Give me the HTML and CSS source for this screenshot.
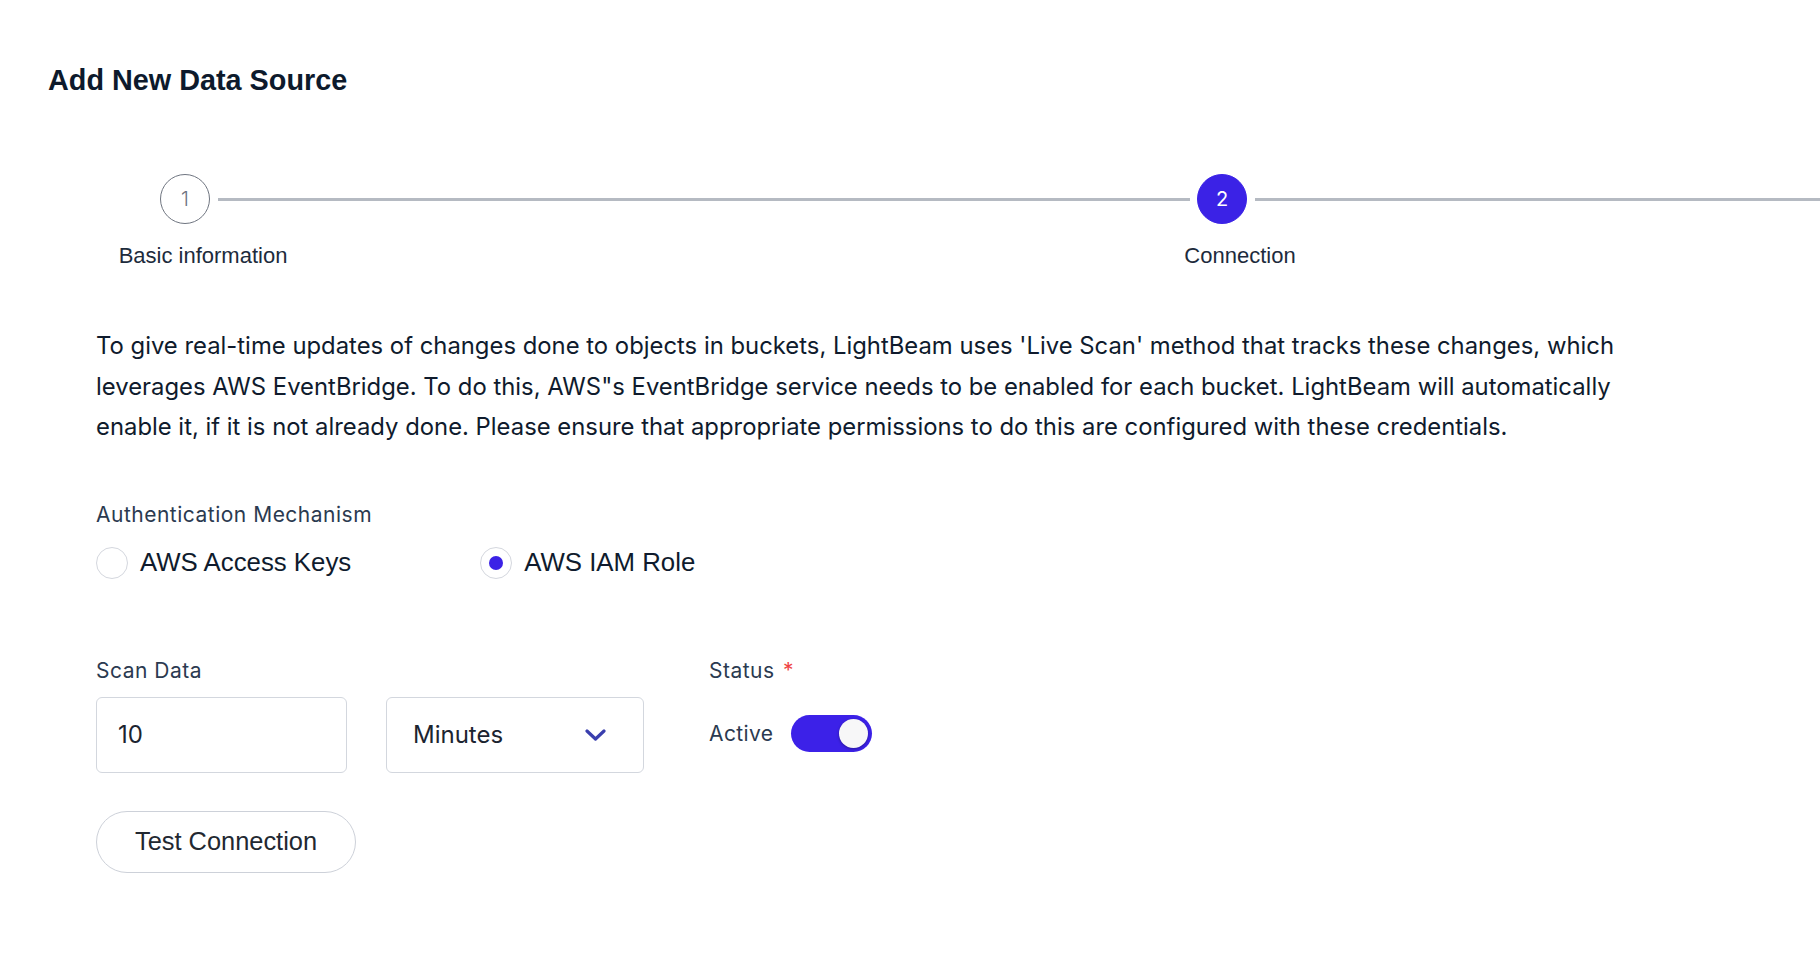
FILE: index.html
```html
<!DOCTYPE html>
<html lang="en">
<head>
    <meta charset="UTF-8">
    <meta name="viewport" content="width=device-width, initial-scale=1.0">
    <title>Add New Data Source</title>
    <link rel="stylesheet" href="styles.css">
</head>
<body>
    <div class="page">
        <h1 class="page-title">Add New Data Source</h1>

        <div class="stepper">
            <div class="step">
                <div class="step-head">
                    <span class="step-num">1</span>
                    <span class="step-line"></span>
                </div>
                <div class="step-label"><span>Basic information</span></div>
            </div>
            <div class="step step-active">
                <div class="step-head">
                    <span class="step-num">2</span>
                    <span class="step-line"></span>
                </div>
                <div class="step-label"><span>Connection</span></div>
            </div>
        </div>

        <div class="form">
            <p class="intro">
                To give real-time updates of changes done to objects in buckets, LightBeam uses 'Live Scan' method that tracks these changes, which
                leverages AWS EventBridge. To do this, AWS"s EventBridge service needs to be enabled for each bucket. LightBeam will automatically
                enable it, if it is not already done. Please ensure that appropriate permissions to do this are configured with these credentials.
            </p>

            <div class="field auth">
                <div class="field-label">Authentication Mechanism</div>
                <div class="radio-group">
                    <label class="radio">
                        <span class="radio-circle"></span>
                        AWS Access Keys
                    </label>
                    <label class="radio radio-checked">
                        <span class="radio-circle"></span>
                        AWS IAM Role
                    </label>
                </div>
            </div>

            <div class="row">
                <div class="field scan">
                    <div class="field-label">Scan Data</div>
                    <div class="scan-inputs">
                        <div class="input-box">10</div>
                        <div class="select-box">
                            <span>Minutes</span>
                            <svg class="chevron" width="21" height="12" viewBox="0 0 21 12">
                                <path d="M2 2l8.5 8 8.5-8" fill="none" stroke="#3a3fae" stroke-width="3.2" stroke-linecap="round" stroke-linejoin="round"/>
                            </svg>
                        </div>
                    </div>
                </div>
                <div class="field">
                    <div class="field-label">Status <span class="required">*</span></div>
                    <div class="status">
                        <span class="status-text">Active</span>
                        <span class="toggle"><span class="toggle-knob"></span></span>
                    </div>
                </div>
            </div>

            <button class="btn-outline">Test Connection</button>
        </div>
    </div>
</body>
</html>
```

FILE: styles.css
```css
body {
    margin: 0;
    background: #ffffff;
    font-family: 'Inter', 'Noto Sans', sans-serif;
    color: #0f1b2d;
    overflow-x: hidden;
}
.page {
    padding: 62px 0 40px 48px;
}
.page-title {
    margin: 0;
    font-family: 'Liberation Sans', Arial, sans-serif;
    font-size: 28.8px;
    line-height: 36px;
    font-weight: 700;
    color: #0d1a2c;
}

/* stepper */
.stepper {
    display: flex;
    margin-top: 76px;
    padding-left: 112px;
    white-space: nowrap;
    overflow: hidden;
}
.step {
    width: 1037px;
    flex-shrink: 0;
}
.step-active {
    flex: 1;
    width: auto;
    min-width: 0;
}
.step-head {
    display: flex;
    align-items: center;
}
.step-num {
    width: 50px;
    height: 50px;
    box-sizing: border-box;
    border: 1px solid #6f7580;
    border-radius: 50%;
    display: flex;
    align-items: center;
    justify-content: center;
    font-size: 20px;
    font-weight: 300;
    color: #6b7280;
    flex-shrink: 0;
}
.step-line {
    flex: 1;
    height: 3px;
    background: #b5bac2;
    margin: 0 7px 0 8px;
}
.step-active .step-num {
    background: #3b22e6;
    border-color: #3b22e6;
    color: #ffffff;
    font-weight: 400;
}
.step-active .step-line {
    margin-right: 0;
}
.step-label {
    width: 86px;
    display: flex;
    justify-content: center;
    margin-top: 19px;
    font-family: 'Liberation Sans', Arial, sans-serif;
    font-size: 22px;
    line-height: 26px;
    color: #1d2b3c;
}

/* form */
.form {
    margin-left: 48px;
}
.intro {
    margin: 57px 0 0;
    max-width: 1570px;
    font-size: 23.85px;
    line-height: 40.5px;
    color: #0f1b2d;
}
.field-label {
    font-size: 21px;
    line-height: 26px;
    letter-spacing: 0.5px;
    color: #2b3a50;
}
.required {
    color: #ef4444;
    margin-left: 2px;
}
.auth {
    margin-top: 54px;
}
.radio-group {
    display: flex;
    gap: 129px;
    margin-top: 19px;
}
.radio {
    display: flex;
    align-items: center;
    gap: 12px;
    font-family: 'Liberation Sans', Arial, sans-serif;
    font-size: 25.8px;
    color: #0f1b2d;
}
.radio-circle {
    width: 32px;
    height: 32px;
    box-sizing: border-box;
    border: 1px solid #d4d7de;
    border-radius: 50%;
    display: flex;
    align-items: center;
    justify-content: center;
}
.radio-checked .radio-circle::after {
    content: '';
    width: 14px;
    height: 14px;
    border-radius: 50%;
    background: #3b22e6;
}

.row {
    display: flex;
    gap: 65px;
    margin-top: 79px;
}
.scan {
    width: 548px;
}
.scan-inputs {
    display: flex;
    gap: 39px;
    margin-top: 13px;
}
.input-box, .select-box {
    height: 76px;
    box-sizing: border-box;
    border: 1px solid #d3d7de;
    border-radius: 6px;
    display: flex;
    align-items: center;
    font-size: 24px;
    color: #1c2430;
}
.input-box {
    width: 251px;
    padding-left: 21px;
}
.select-box {
    width: 258px;
    padding: 0 37px 0 26px;
    justify-content: space-between;
}
.status {
    display: flex;
    align-items: center;
    gap: 18px;
    margin-top: 12px;
    height: 76px;
}
.status-text {
    font-size: 21px;
    letter-spacing: 0.4px;
    color: #2b3a50;
}
.toggle {
    width: 81px;
    height: 37px;
    border-radius: 19px;
    background: #3c21e8;
    display: flex;
    align-items: center;
    justify-content: flex-end;
    padding-right: 4px;
    box-sizing: border-box;
}
.toggle-knob {
    width: 29px;
    height: 29px;
    border-radius: 50%;
    background: #f7f7f8;
    box-shadow: 0 1px 3px rgba(0, 0, 0, 0.35);
}

.btn-outline {
    margin-top: 38px;
    width: 260px;
    height: 62px;
    border: 1px solid #cdd1d9;
    border-radius: 31px;
    background: #ffffff;
    font-family: 'Liberation Sans', Arial, sans-serif;
    font-size: 25.4px;
    color: #222831;
    cursor: pointer;
}
```
